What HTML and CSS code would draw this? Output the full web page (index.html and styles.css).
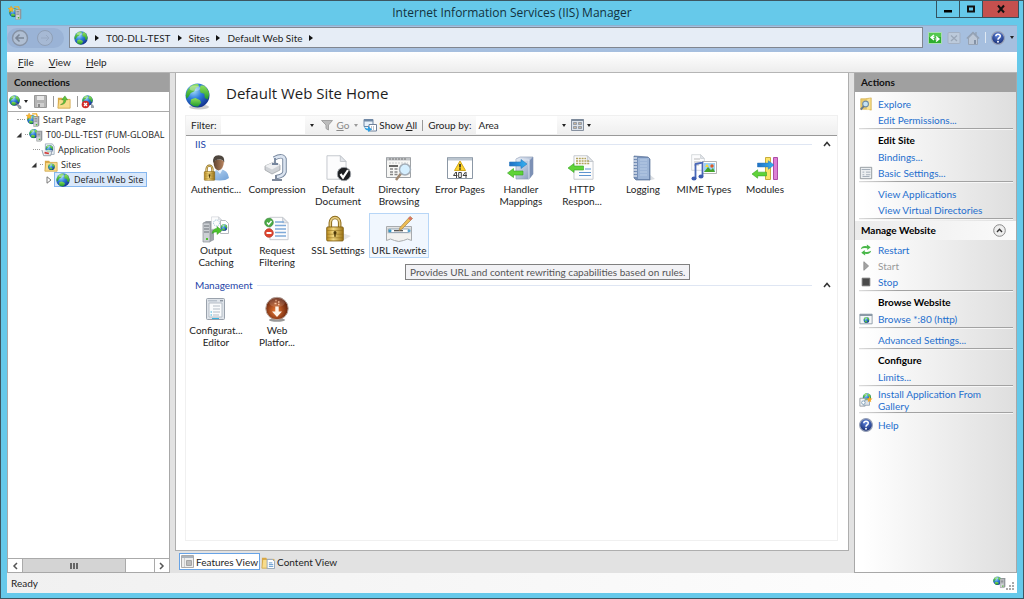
FILE: index.html
```html
<!DOCTYPE html>
<html lang="en">
<head>
<meta charset="utf-8">
<title>Internet Information Services (IIS) Manager</title>
<link rel="stylesheet" href="styles.css">
</head>
<body>
<svg class="defs" aria-hidden="true">
  <defs>
    <radialGradient id="gSea" cx=".35" cy=".3" r=".75"><stop offset="0" stop-color="#a5dcfa"/><stop offset=".45" stop-color="#2f7fdc"/><stop offset="1" stop-color="#12308c"/></radialGradient>
    <linearGradient id="gLand" x1="0" y1="0" x2="0" y2="1"><stop offset="0" stop-color="#8fe05a"/><stop offset="1" stop-color="#1f9a2c"/></linearGradient>
    <linearGradient id="gGold" x1="0" y1="0" x2="1" y2="0"><stop offset="0" stop-color="#b98a1c"/><stop offset=".4" stop-color="#f3d983"/><stop offset="1" stop-color="#9c7314"/></linearGradient>
    <linearGradient id="gBlue" x1="0" y1="0" x2="1" y2="0"><stop offset="0" stop-color="#1f6fc4"/><stop offset="1" stop-color="#35b2f2"/></linearGradient>
    <linearGradient id="gBox" x1="0" y1="0" x2="1" y2="1"><stop offset="0" stop-color="#eef3fa"/><stop offset="1" stop-color="#7f93b8"/></linearGradient>
    <linearGradient id="gSkin" x1="0" y1="0" x2="1" y2="0"><stop offset="0" stop-color="#5f432f"/><stop offset="1" stop-color="#b98560"/></linearGradient>
    <linearGradient id="gShirt" x1="0" y1="0" x2="1" y2="1"><stop offset="0" stop-color="#b9d6f3"/><stop offset="1" stop-color="#6f9fd6"/></linearGradient>
    <radialGradient id="gHelp" cx=".5" cy=".3" r=".7"><stop offset="0" stop-color="#5f86e0"/><stop offset="1" stop-color="#14296f"/></radialGradient>
    <radialGradient id="gRust" cx=".45" cy=".6" r=".6"><stop offset="0" stop-color="#ee7b34"/><stop offset="1" stop-color="#5a1a08"/></radialGradient>
    <symbol id="globe" viewBox="0 0 24 24">
      <circle cx="12" cy="12" r="11.500" fill="url(#gSea)"/>
      <path d="M3 6C5 2.500 9 .8 12.500 1l1 2-3 1.500L9 8 5.500 9.500 3.500 13 1.500 15Q-.2 10 3 6z" fill="url(#gLand)"/>
      <path d="M15 2.500l3-.2q4.500 3 5.300 8.500l-1.300 5-3-1.500-.5-4-3.500-1-1-3z" fill="url(#gLand)"/>
      <path d="M6 15.500l4-1 4.500 2 1 2.500-3 3.500Q8 23 5 20z" fill="url(#gLand)"/>
      <ellipse cx="9.500" cy="5" rx="5" ry="2.500" fill="#fff" opacity=".35"/>
    </symbol>
    <symbol id="server" viewBox="0 0 10 16">
      <path d="M1 2l2-1.500h6V14l-2 1.500H1z" fill="#8f959b"/><path d="M1 2h6v13.500H1z" fill="#ced2d5" stroke="#999" stroke-width=".6"/>
      <path d="M2 4h4M2 6h4M2 8h4" stroke="#74787c"/><path d="M4 12h2v2H4z" fill="#4fbb2d"/>
    </symbol>
    <symbol id="globeserver" viewBox="0 0 16 16">
      <use href="#globe" x="0" y="1" width="11" height="11"/><use href="#server" x="8" y="2" width="8" height="14"/>
    </symbol>
    <symbol id="startpage" viewBox="0 0 16 16">
      <use href="#globe" x="1" y="2" width="11" height="11"/><use href="#server" x="8" y="3" width="8" height="13"/>
      <path d="M3.500 0l1 2.300 2.500.3-2 1.700.6 2.500-2.100-1.300-2.200 1.300.6-2.500L0 2.600l2.500-.3z" fill="#f6b62e" stroke="#da8a12" stroke-width=".4"/><path d="M7 1h5l1 3" fill="none" stroke="#efae2c" stroke-width="1.500"/>
    </symbol>
    <symbol id="folder" viewBox="0 0 16 16">
      <path d="M1 3h5l1 2h8v10H1z" fill="#dba944"/><path d="M2 5h13v10H1z" fill="#f8dc8b" stroke="#c99a3b" stroke-width=".7"/>
    </symbol>
    <symbol id="help" viewBox="0 0 16 16">
      <circle cx="8" cy="8" r="7.300" fill="url(#gHelp)" stroke="#9aa3b8" stroke-width="1.300"/>
      <path d="M5.500 6Q5.600 3.600 8 3.600q2.600 0 2.600 2.200 0 1.300-1.500 2.200Q8 8.700 8 10" fill="none" stroke="#fff" stroke-width="1.700"/><circle cx="8" cy="12.200" r="1.100" fill="#fff"/>
    </symbol>
    <symbol id="padlock" viewBox="0 0 20 26">
      <path d="M5.500 13V7.500a4.500 5 0 0 1 9 0V13" fill="none" stroke="#8b6a1a" stroke-width="3.400"/><path d="M5.500 13V7.500a4.500 5 0 0 1 9 0V13" fill="none" stroke="#e6cd83" stroke-width="1.500"/>
      <rect x="2" y="11.500" width="16" height="13.500" rx="1" fill="url(#gGold)" stroke="#7d5c10" stroke-width=".8"/><path d="M2.500 15h15M2.500 18.500h15M2.500 22h15" stroke="#8b6a1a" opacity=".5"/>
      <circle cx="10" cy="17" r="1.500" fill="#4b380a"/><path d="M9.300 17h1.400v4H9.300z" fill="#4b380a"/>
    </symbol>
    <symbol id="page" viewBox="0 0 22 26">
      <path d="M1 .7h14l6 6V25.300H1z" fill="#fcfcfd" stroke="#c3c7cd"/><path d="M15 .7v6h6z" fill="#e3e6eb" stroke="#c3c7cd"/>
    </symbol>
    <symbol id="greenarrow" viewBox="0 0 16 10"><path d="M0 5L6 .5V3h9.500v4H6v2.500z" fill="#5fd338" stroke="#35a322" stroke-width=".6"/></symbol>
    <symbol id="bluearrow" viewBox="0 0 18 10"><path d="M18 5L12 .5V3H.5v4H12v2.500z" fill="url(#gBlue)" stroke="#2a78bd" stroke-width=".6"/></symbol>
    <symbol id="chev" viewBox="0 0 8 6"><path d="M1 5l3-3.500L7 5" fill="none" stroke="#333" stroke-width="1.500"/></symbol>
  </defs>
</svg>

<div class="window">
  <header class="titlebar">
    <svg class="i14 app-icon" aria-hidden="true"><use href="#startpage"/></svg>
    <h1>Internet Information Services (IIS) Manager</h1>
    <div class="caption">
      <button aria-label="Minimize"><svg width="10" height="10"><path d="M1 6h8v2.500H1z"/></svg></button>
      <button aria-label="Maximize"><svg width="10" height="10"><path d="M2 2.500h6v5H2z" fill="none" stroke="#111" stroke-width="2"/></svg></button>
      <button class="close" aria-label="Close"><svg width="10" height="10"><path d="M2 1.500l6 7M8 1.500l-6 7" stroke="#111" stroke-width="2"/></svg></button>
    </div>
  </header>

  <div class="client">
    <nav class="navbar" aria-label="Location">
      <div class="history">
        <button aria-label="Back"><svg viewBox="0 0 18 18"><circle cx="9" cy="9" r="7.500" fill="#b0bfd3" stroke="#8793a5" stroke-width="1.400"/><path d="M13 9H5.500M8.500 5.500L5 9l3.500 3.500" fill="none" stroke="#7a8697" stroke-width="1.600"/></svg></button>
        <button aria-label="Forward"><svg viewBox="0 0 18 18"><circle cx="9" cy="9" r="7.500" fill="#a6b9d4" stroke="#8f9fb6"/><path d="M5 9h8M10 6l3 3-3 3" fill="none" stroke="#98a9c2"/></svg></button>
      </div>
      <div class="address">
        <svg class="i14" aria-hidden="true"><use href="#globe"/></svg>
        <i class="tri"></i><button>T00-DLL-TEST</button>
        <i class="tri"></i><button>Sites</button>
        <i class="tri"></i><button>Default Web Site</button>
        <i class="tri"></i>
      </div>
      <div class="navtools">
        <button aria-label="Refresh"><svg width="14" height="14" viewBox="0 0 14 14"><rect x=".5" y="1.500" width="13" height="11" fill="#2eae2e" stroke="#a7ddb0"/><path d="M1 2h12v4H1z" fill="#6ed864" opacity=".6"/><path d="M6 4L3 6.500 6 9M3 6.500h3.500M8 5.500l3 2.500-3 2.500M11 8H7.500" fill="none" stroke="#fff" stroke-width="1.400"/></svg></button>
        <button aria-label="Stop loading" disabled><svg width="14" height="14" viewBox="0 0 14 14"><rect x="1" y="1.500" width="12" height="11" rx="1" fill="#bccadb" stroke="#a4b1c3"/><path d="M4 4.500l6 5.500M10 4.500L4 10" stroke="#9aa7b8" stroke-width="1.300"/></svg></button>
        <button aria-label="Home" disabled><svg width="14" height="14" viewBox="0 0 14 14"><path d="M2.500 7v6.500h9V7L7 2.500z" fill="#bcc7d6" stroke="#98a4b5"/><path d="M.8 7.500L7 1.500l6.200 6M10 1v3" fill="none" stroke="#93a0b2" stroke-width="1.300"/><path d="M8 9h2v4H8z" fill="#8492a6"/></svg></button>
        <i class="bar light"></i>
        <button aria-label="Help"><svg class="i14"><use href="#help"/></svg></button>
        <i class="down"></i>
      </div>
    </nav>

    <nav class="menubar" aria-label="Menu">
      <button><span><u>F</u>ile</span></button><button><span><u>V</u>iew</span></button><button><span><u>H</u>elp</span></button>
    </nav>

    <main class="panes">
      <aside class="connections">
        <h2 class="pane-title">Connections</h2>
        <div class="conn-tools">
          <button aria-label="Connect"><svg width="13" height="14" viewBox="0 0 13 14"><use href="#globe" width="11" height="11" y="0"/><path d="M7 8l5 3.500v2H10z" fill="#9aa3ab" stroke="#666" stroke-width=".5"/></svg></button><i class="down"></i>
          <button aria-label="Save" disabled><svg width="13" height="13" viewBox="0 0 13 13"><path d="M.5.5h12v12H.5z" fill="#b4b4b4" stroke="#989898"/><path d="M3 1h7v4H3z" fill="#e6e6e6"/><path d="M3 8h7v4H3z" fill="#cfcfcf"/><path d="M4 9h2v3H4z" fill="#888"/></svg></button>
          <i class="bar"></i>
          <button aria-label="Up"><svg width="14" height="14" viewBox="0 0 16 16"><use href="#folder"/><path d="M4 11Q8 10 8 5.500H5.500L9 1l3 4.500h-2Q10 11 4 11z" fill="#5dc33c" stroke="#378c20" stroke-width=".6"/></svg></button>
          <i class="bar"></i>
          <button aria-label="Remove connection"><svg width="14" height="14" viewBox="0 0 14 14"><use href="#globe" width="11" height="11" x="1"/><path d="M10 8l3 3v2h-3z" fill="#9aa3ab"/><circle cx="4.500" cy="9.500" r="3.800" fill="#d22c28"/><path d="M3 8l3 3M6 8l-3 3" stroke="#fff" stroke-width="1.300"/></svg></button>
        </div>
        <ul class="tree">
          <li><span class="node l1"><i class="dots"></i><svg class="i14"><use href="#startpage"/></svg><a href="#">Start Page</a></span></li>
          <li><span class="node l1"><svg class="open" viewBox="0 0 6 6"><path d="M5.500.5v5h-5z"/></svg><i class="dash"></i><svg class="i14"><use href="#globeserver"/></svg><a href="#">T00-DLL-TEST (FUM-GLOBAL</a></span>
            <ul>
              <li><span class="node l2"><i class="dots"></i><svg class="i14" viewBox="0 0 16 16"><path d="M5 1h8l2 3v9H5z" fill="#f2f6fa" stroke="#9aa9b8"/><use href="#globe" x="5" y="2" width="9" height="9"/><path d="M1 8l2 6.500h8L13 8" fill="#eceff2" fill-opacity=".7" stroke="#8b98a5"/><path d="M4 11l5 1" stroke="#d13c37" stroke-width="1.800"/></svg><a href="#">Application Pools</a></span></li>
              <li><span class="node l2"><svg class="open" viewBox="0 0 6 6"><path d="M5.500.5v5h-5z"/></svg><i class="dash"></i><svg class="i14" viewBox="0 0 16 16"><use href="#folder"/><use href="#globe" x="4.500" y="6" width="8" height="8"/></svg><a href="#">Sites</a></span>
                <ul>
                  <li><span class="node l3"><svg class="shut" viewBox="0 0 6 8"><path d="M1 .8L5 4 1 7.200z"/></svg><span class="selected"><svg class="i14"><use href="#globe"/></svg><a href="#">Default Web Site</a></span></span></li>
                </ul></li>
            </ul></li>
        </ul>
        <div class="hscroll">
          <button aria-label="Scroll left"><svg width="6" height="8"><path d="M5 1L2 4l3 3" fill="none" stroke="#555" stroke-width="1.500"/></svg></button>
          <div class="track"><div class="thumb"><i></i><i></i><i></i></div></div>
          <button aria-label="Scroll right"><svg width="6" height="8"><path d="M1 1l3 3-3 3" fill="none" stroke="#555" stroke-width="1.500"/></svg></button>
        </div>
      </aside>

      <section class="center">
        <div class="home">
          <div class="home-head">
            <svg class="big-globe" viewBox="0 0 26 27"><ellipse cx="14" cy="24" rx="10" ry="2.500" fill="#aaa" opacity=".6"/><use href="#globe" width="25" height="25"/></svg>
            <h2>Default Web Site Home</h2>
          </div>
          <div class="listbox">
            <div class="filterbar">
              <label for="filter">Filter:</label>
              <input id="filter" type="text"><i class="down"></i>
              <button class="go" disabled><svg width="12" height="12" viewBox="0 0 12 12"><path d="M.5 1.500h11L7.500 6v5L5 9.500V6z" fill="#bcbcbc" stroke="#a2a2a2"/></svg><span><u>G</u>o</span></button><i class="down dim"></i>
              <button class="showall"><svg width="14" height="14" viewBox="0 0 14 14"><path d="M1 1.500h9v7H1z" fill="#e8f1fa" stroke="#7088a5"/><path d="M1 2.500h9" stroke="#7088a5" stroke-width="2"/><path d="M6 6.500h7.500V13H6z" fill="#fff" stroke="#70819a"/><path d="M8 9h4M8 11h4" stroke="#70819a" stroke-dasharray="1 1"/><path d="M1 6q0 4.500 4 4.500V8l4 3.500-4 2.500v-1.500Q1 12.500 1 6z" fill="#2f9fe2"/></svg><span>Show <u>A</u>ll</span></button>
              <i class="bar"></i>
              <label for="group">Group by:</label>
              <select id="group"><option>Area</option><option>Category</option></select><i class="down"></i>
              <button aria-label="View" class="viewbtn"><svg width="13" height="12" viewBox="0 0 13 12"><path d="M.5.500h12v11H.5z" fill="#dde3ea" stroke="#8791a0"/><path d="M.5 1h12" stroke="#7c899a" stroke-width="2"/><path d="M2.500 3.500h3v2h-3zM7.500 3.500h3v2h-3zM2.500 7.500h3v2h-3zM7.500 7.500h3v2h-3z" fill="#cbb79b" stroke="#7d889a" stroke-width=".7"/></svg></button><i class="down"></i>
            </div>

            <section class="group">
              <header><h3>IIS</h3><hr><button aria-label="Collapse IIS"><svg width="8" height="6"><use href="#chev"/></svg></button></header>
              <div class="tiles">
                <a href="#"><svg viewBox="0 0 28 28"><path d="M9 26q0-10 9-10.500 8 0 9 8.500-3 2.500-9 2.500z" fill="url(#gShirt)"/><path d="M14.500 15.500l3.500 4.500 3-5z" fill="#e8f2fc"/><path d="M11.500 7q0 8.500 5 9.500 5-1 5.500-9.500-5-3-10.500 0z" fill="url(#gSkin)"/><path d="M11.300 9Q10 1.200 16.500 1.200T22.300 8.500Q21 5 17 5.500q-4 0-5.700 3.500z" fill="#4e463e"/><use href="#padlock" x="1" y="10" width="13" height="17"/></svg>Authentic...</a>
                <a href="#"><svg viewBox="0 0 28 28"><path d="M2 12l9-4 6 3v5l-8 4-7-4z" fill="#cfd2d6" stroke="#989ca1" stroke-width=".7"/><path d="M2 12l9-4 6 3-8 4.500z" fill="#eff0f2"/><path d="M11 4.500Q20 0 21.500 5v13q-1 4-8 5" fill="none" stroke="#76869d" stroke-width="4.500"/><path d="M11 4.500Q20 0 21.500 5v13q-1 4-8 5" fill="none" stroke="#dbe4f0" stroke-width="2.600"/><path d="M12 4v6M9 10h6" stroke="#76869d" stroke-width="1.800"/><path d="M13 21v4M9 26h10" stroke="#7d889a" stroke-width="2"/></svg>Compression</a>
                <a href="#"><svg viewBox="0 0 28 28"><use href="#page" x="2" y="1" width="21" height="25"/><circle cx="20" cy="20" r="6.700" fill="#1d1f22" stroke="#9a9ea3"/><path d="M16.500 20l2.500 3.500 5-7.500" fill="none" stroke="#fff" stroke-width="2.200"/></svg>Default Document</a>
                <a href="#"><svg viewBox="0 0 28 28"><path d="M1.500 3.500h24v20h-24z" fill="#f7f7f5" stroke="#9ea2a6"/><path d="M2 5h23" stroke="#c0c3c6" stroke-width="3"/><path d="M4 5h18" stroke="#777" stroke-dasharray="2 1"/><path d="M4 9h19" stroke="#c9cbcc" stroke-dasharray="2 1"/><path d="M4 12h9" stroke="#444" stroke-width="1.600"/><path d="M5 15h3M9.500 15h3M5 18h3M9.500 18h3M5 20.500h3M9.500 20.500h3" stroke="#888" stroke-width="1.400"/><path d="M16 19.500l-5 6.500" stroke="#a08870" stroke-width="2.500"/><circle cx="20" cy="15.500" r="5.500" fill="#d5efff" stroke="#a3adb7" stroke-width="1.500"/></svg>Directory Browsing</a>
                <a href="#"><svg viewBox="0 0 28 28"><path d="M1.500 3.500h25v21h-25z" fill="#fff" stroke="#8c98a6"/><path d="M2 5h24" stroke="#bac4ce" stroke-width="3"/><path d="M14 7l5.500 9.500h-11z" fill="#ffd52b" stroke="#cfa61c"/><path d="M14 10v3.500M14 14.300v1.500" stroke="#222" stroke-width="1.500"/><path d="M10 18l-2.500 3.500h4M10.500 18v6M15.300 18.500h-2.600v5h2.600zM19.500 18L17 21.500h4M20 18v6" fill="none" stroke="#444"/></svg>Error Pages</a>
                <a href="#"><svg viewBox="0 0 28 28"><path d="M9 5l4-2h13v17l-4 5H9z" fill="url(#gBox)" stroke="#93a1b9" stroke-width=".7"/><path d="M22 7l4-4v17l-4 5z" fill="#7c90b5"/><path d="M9 6h13v19" fill="none" stroke="#dde6f2"/><use href="#bluearrow" x="2" y="5" width="18" height="10"/><use href="#greenarrow" x="0" y="14" width="17" height="10"/></svg>Handler Mappings</a>
                <a href="#"><svg viewBox="0 0 28 28"><use href="#page" x="5" y="1" width="21" height="25"/><path d="M8 4.500h10M8 7h13M8 9.500h14" stroke="#b3a35d" stroke-width="1.600" stroke-dasharray="2 .8"/><path d="M17 15h6M11 18.500h12M11 21.500h12" stroke="#5e94cf" stroke-width="1.200"/><use href="#greenarrow" x="0" y="9" width="16" height="10"/></svg>HTTP Respon...</a>
                <a href="#"><svg viewBox="0 0 28 28"><path d="M20 20l6 5-6 1.500z" fill="#c5c9d0" opacity=".6"/><path d="M5 2l14 1 2 2v21H7l-2-2z" fill="#7690b8" stroke="#5a7299" stroke-width=".7"/><path d="M9 4h11v21H9z" fill="#9db5d7"/><path d="M11 6h7M11 9h7M11 12h7M11 15h7M11 18h7M11 21h7" stroke="#b7cbe5"/><path d="M4 4h4M4 7h4M4 10h4M4 13h4M4 16h4M4 19h4M4 22h4" stroke="#dae1ed" stroke-width="1.300"/></svg>Logging</a>
                <a href="#"><svg viewBox="0 0 28 28"><use href="#page" x="1" y="0" width="14" height="17"/><path d="M4 5h6M4 8h7M4 11h5" stroke="#bbb"/><path d="M12.500 7.500h14v12h-14z" fill="#fff" stroke="#b4b4b4"/><path d="M14 9h11v9H14z" fill="#9dd2f5"/><path d="M14 18l4-5 3 3 2-2 2 4z" fill="#46a52b"/><circle cx="22" cy="12" r="1.700" fill="#e05a26"/><path d="M15 13l2-3 2 3z" fill="#ffd831"/><path d="M5.500 24.500V10l7-1.500V22" fill="none" stroke="#4867b8" stroke-width="1.800"/><ellipse cx="4" cy="24.500" rx="2.500" ry="2" fill="#3d5db0"/><ellipse cx="11" cy="22.500" rx="2.500" ry="2" fill="#3d5db0"/></svg>MIME Types</a>
                <a href="#"><svg viewBox="0 0 28 28"><path d="M14.500 3.500h5v22h-5z" fill="#fae46a" stroke="#c9ad3a"/><path d="M22.500 3.500h4v22h-4z" fill="#dd80d5" stroke="#ad4ca6"/><use href="#bluearrow" x="6" y="6" width="17" height="10"/><use href="#greenarrow" x="1" y="15" width="15" height="10"/></svg>Modules</a>
                <a href="#"><svg viewBox="0 0 28 28"><path d="M1 8l3-2h8v19l-4 2H1z" fill="#9da2a8"/><path d="M1 8h7v19H1z" fill="#ccd0d4" stroke="#8b9096" stroke-width=".7"/><path d="M2 11h5M2 14h5M2 17h5" stroke="#6b7077" stroke-width="1.200"/><path d="M4 23h2v2H4z" fill="#50be30"/><use href="#page" x="9" y="1" width="11" height="14"/><circle cx="14.500" cy="8" r="3" fill="none" stroke="#8ab7cf" stroke-dasharray="1 1"/><path d="M18.500 5.500h5l3 3v10h-8z" fill="#fff" stroke="#b6babf"/><use href="#globe" x="18.500" y="9" width="7" height="7"/><path d="M20 15.500l-5-4v2q-4 0-5 5 2-2 5-1.500v2.500z" fill="#4dc42a" stroke="#35992a" stroke-width=".5"/></svg>Output Caching</a>
                <a href="#"><svg viewBox="0 0 28 28"><use href="#page" x="6" y="1" width="20" height="25"/><path d="M12 7h9M12 10.500h11M12 14h11M12 17.500h11M12 21h11" stroke="#7fa9d8" stroke-width="1.300"/><circle cx="6" cy="7.500" r="4.300" fill="#4aab45" stroke="#38853a" stroke-width=".7"/><path d="M4 7.500l1.700 2L8.500 6" fill="none" stroke="#fff" stroke-width="1.400"/><circle cx="6" cy="18" r="4.300" fill="#de432d" stroke="#b33a2a" stroke-width=".7"/><path d="M3.500 18h5" stroke="#fff" stroke-width="2"/></svg>Request Filtering</a>
                <a href="#"><svg viewBox="0 0 28 28"><path d="M18 18l9 3-9 5z" fill="#bbb" opacity=".4"/><use href="#padlock" x="0" y="0" width="22" height="27"/></svg>SSL Settings</a>
                <a href="#" class="hot" aria-describedby="tip"><svg viewBox="0 0 28 28"><path d="M1.500 11.500h25v14q-4-3-8 0-5 2-9 0-4-3-8 0z" fill="#f1f1ef" stroke="#a8abae"/><path d="M2 12.500h24v6H2z" fill="#d4d7d8"/><path d="M3.500 14h20v3.500h-20z" fill="#fff" stroke="#9aa9b6"/><circle cx="5" cy="15.700" r="1.500" fill="#3597c5"/><circle cx="24" cy="15.700" r="1.500" fill="#5aa5d0"/><path d="M9 15.700h9" stroke="#444" stroke-width="1.200"/><path d="M14 15.500l1-3L25 1.500l2.500 2L17 14z" fill="#edbd55" stroke="#a58245" stroke-width=".7"/><path d="M25 1.500l2.500 2-2 2-2.500-2z" fill="#d77565"/></svg>URL Rewrite<span id="tip" role="tooltip">Provides URL and content rewriting capabilities based on rules.</span></a>
              </div>
            </section>

            <section class="group second">
              <header><h3>Management</h3><hr><button aria-label="Collapse Management"><svg width="8" height="6"><use href="#chev"/></svg></button></header>
              <div class="tiles">
                <a href="#"><svg viewBox="0 0 28 28"><rect x="4.500" y="3.500" width="18" height="21" rx="1" fill="#dfe4ea" stroke="#9aa2ac"/><path d="M7 8h13v14H7z" fill="#fafbfc" stroke="#b5bdc6"/><path d="M6 5.800h9" stroke="#a9b3be"/><path d="M18 5.800h3" stroke="#6a7684"/><path d="M11 11h7M11 14h7M11 17h7M11 20h6" stroke="#b5bdc6"/><path d="M8.500 17h1.500M8.500 20h1.500M10 23.500h7" stroke="#39b2dd"/></svg>Configurat... Editor</a>
                <a href="#"><svg viewBox="0 0 28 28"><ellipse cx="14" cy="25" rx="8" ry="1.800" fill="#555" opacity=".6"/><circle cx="14" cy="13.500" r="11.200" fill="url(#gRust)" stroke="#b8a79f"/><ellipse cx="14" cy="7.500" rx="8" ry="4.500" fill="#fff" opacity=".15"/><path d="M12.300 11.500h3.400v5h3.300l-5 5.500-5-5.500h3.300z" fill="#fff5e9"/><path d="M11.500 8.500h2M15 7h1.500M15 9.500h1.500M12.500 5.500h1" stroke="#fbc49f" stroke-width="1.400"/></svg>Web Platfor...</a>
              </div>
            </section>
          </div>
        </div>
        <div class="viewtabs">
          <button class="on"><svg width="13" height="13" viewBox="0 0 13 13"><path d="M.5.500h12v12H.5z" fill="#eee" stroke="#aaa"/><path d="M1 2h11" stroke="#a9b2bc" stroke-width="2"/><path d="M3.500 3v9" stroke="#ccc"/><path d="M5.500 5.500h5v5h-5z" fill="#ddd" stroke="#a4a4a4"/><path d="M6 7h4M6 9h4" stroke="#999"/></svg>Features View</button>
          <button><svg width="14" height="14" viewBox="0 0 16 16"><use href="#folder"/><path d="M7 5h6l2.500 2.500V15.500H7z" fill="#fff" stroke="#8aa1bb"/><path d="M9 9h4M9 11h5M9 13h5" stroke="#4e8cc8"/></svg>Content View</button>
        </div>
      </section>

      <aside class="actions">
        <h2 class="pane-title">Actions</h2>
        <div class="actlist">
          <p><svg class="i14" viewBox="0 0 16 16"><path d="M2 2h5l7-1v14l-4-1H2z" fill="#eccb69" stroke="#cfa94a" stroke-width=".7"/><path d="M9 3l4-1.500V14l-4 1z" fill="#f8e39a"/><circle cx="7.500" cy="8" r="3.300" fill="#c4e3f6" stroke="#708ba3" stroke-width="1.200"/><path d="M5.500 10.500L2 14.500" stroke="#65798c" stroke-width="2"/></svg><a href="#">Explore</a></p>
          <p><a href="#">Edit Permissions...</a></p>
          <hr>
          <h3>Edit Site</h3>
          <p><a href="#">Bindings...</a></p>
          <p><svg class="i14" viewBox="0 0 16 16"><path d="M1.500 1.500h13v13h-13z" fill="#eceff1" stroke="#8d9399"/><path d="M3 4h10M4 7h2M8 7h5M4 10h2M8 10h5M4 12h8" stroke="#9ba7b2"/></svg><a href="#">Basic Settings...</a></p>
          <hr>
          <p><a href="#">View Applications</a></p>
          <p><a href="#">View Virtual Directories</a></p>
          <hr class="flush">
          <div class="manage"><h3>Manage Website</h3><button aria-label="Collapse Manage Website"><svg width="13" height="13" viewBox="0 0 13 13"><circle cx="6.500" cy="6.500" r="5.800" fill="#eee" stroke="#888"/><path d="M4 8l2.500-2.800L9 8" fill="none" stroke="#333" stroke-width="1.400"/></svg></button></div>
          <p><svg class="i12" viewBox="0 0 14 14"><path d="M1 6Q2 1.500 8 2.500V.5l4.500 3.300L8.500 7V5Q4 4 1 6zM13 8q-1 4.500-7 3.500v2L1.500 10.200 5.500 7v2Q10 10 13 8z" fill="#49b749"/></svg><a href="#">Restart</a></p>
          <p><svg class="i12" viewBox="0 0 14 14"><path d="M4.500 2l5.500 5-5.500 5z" fill="#a3a3a3" stroke="#8b8b8b"/></svg><button disabled>Start</button></p>
          <p><svg class="i12" viewBox="0 0 14 14"><path d="M2.500 2.500h9v9h-9z" fill="#4a4a4a" stroke="#777"/></svg><a href="#">Stop</a></p>
          <hr>
          <h3>Browse Website</h3>
          <p><svg class="i14" viewBox="0 0 16 16"><path d="M1 2.500h14v11H1z" fill="#f4f6f7" stroke="#8a98a5"/><path d="M1 3.500h14" stroke="#8493a2" stroke-width="2"/><use href="#globe" x="5" y="5.500" width="7" height="7"/></svg><a href="#">Browse *:80 (http)</a></p>
          <hr>
          <p><a href="#">Advanced Settings...</a></p>
          <hr>
          <h3>Configure</h3>
          <p><a href="#">Limits...</a></p>
          <hr class="flush">
          <p class="wrap"><svg class="i14" viewBox="0 0 16 16"><use href="#globe" x="4" y="0" width="10" height="10"/><path d="M1 6h6v9H1z" fill="#f1f2f3" stroke="#91989f"/><path d="M7 8h5v6H5z" fill="#dce2e8" stroke="#93a3b2"/><circle cx="5" cy="11" r="2" fill="#fff" stroke="#7c9bb6"/><path d="M12 3.500l1 2.500 2.500.5-2 1.500.5 2.500-2-1.300-2 1.300.5-2.500-2-1.500L11 6z" fill="#f5a927"/></svg><a href="#">Install Application From Gallery</a></p>
          <hr>
          <p><svg class="i14"><use href="#help"/></svg><a href="#">Help</a></p>
        </div>
      </aside>
    </main>

    <footer class="status"><span>Ready</span><svg width="22" height="16" viewBox="0 0 22 16"><use href="#globeserver" width="13" height="14"/><path d="M19 7h2v2h-2zM16 10h2v2h-2zM19 10h2v2h-2zM13 13h2v2h-2zM16 13h2v2h-2zM19 13h2v2h-2z" fill="#aaa"/></svg></footer>
  </div>
</div>
</body>
</html>
```
FILE: styles.css
```css
* { box-sizing: border-box; }
body { margin: 0; height: 100vh; overflow: hidden; font: 10px/12px Lato, "Open Sans", sans-serif; color: #1e1e1e; }
button, input, select { font: inherit; color: inherit; background: none; border: 0; padding: 0; margin: 0; }
button { display: flex; align-items: center; }
h1, h2, h3, p, ul { margin: 0; padding: 0; font-weight: normal; font-size: inherit; }
ul { list-style: none; }
a { color: inherit; text-decoration: none; }
svg { flex: none; display: block; }
hr { border: 0; margin: 0; }
.defs { position: absolute; width: 0; height: 0; }
.i14 { width: 14px; height: 14px; }
.i12 { width: 12px; height: 12px; }

.window { height: 100%; display: flex; flex-direction: column; background: #66c9ea; border: 1px solid #3d5661; padding: 0 6px 5px; }
.titlebar { height: 24px; flex: none; display: grid; grid-template-columns: 1fr auto 1fr; align-items: center; }
.titlebar h1 { font-family: "Open Sans", "Noto Sans", sans-serif; font-size: 12px; line-height: 16px; color: #12313d; }
.app-icon { margin-left: 1px; }
.caption { display: flex; justify-self: end; align-self: start; border: 1px solid #34525f; border-top: 0; margin-right: -2px; }
.caption button { width: 23px; height: 16px; justify-content: center; border-right: 1px solid #34525f; }
.caption .close { width: 35px; background: #c5504e; border: 0; }

.client { flex: 1; min-height: 0; display: flex; flex-direction: column; background: #e2e2e2; }
.navbar { height: 27px; flex: none; display: flex; align-items: center; gap: 5px; background: #a6bfdf; border-top: 1px solid #8fb0cf; padding-bottom: 3px; }
.history { width: 57px; display: flex; justify-content: space-between; background: #9ab3d6; border-radius: 11px; padding: 1px 10px 1px 4px; }
.history svg { width: 18px; height: 18px; }
.address { flex: 1; height: 21px; display: flex; align-items: center; gap: 7px; padding-left: 4px; background: #e6edf6; border: 1px solid #80868f; }
.navtools { display: flex; align-items: center; gap: 5px; width: 89px; }
.tri { border: 3px solid transparent; border-left: 4px solid #111; border-right: 0; }
.down { border: 2px solid transparent; border-top: 3px solid #222; border-bottom: 0; flex: none; }
.dim { border-top-color: #999; }
.bar { width: 1px; height: 11px; background: #999; }
.bar.light { background: #dfe8f2; }
.menubar { height: 21px; flex: none; display: flex; align-items: center; gap: 15px; padding-left: 11px; background: linear-gradient(#fff, #ededed); border-bottom: 1px solid #b5b5b5; }

.panes { flex: 1; min-height: 0; display: grid; grid-template-columns: 163px minmax(0, 1fr) 163px; gap: 5px; }
.pane-title { font-weight: bold; background: #a0a0a0; color: #111; height: 19px; padding: 3px 6px; }
.connections { display: flex; flex-direction: column; min-width: 0; background: #fff; border: 1px solid #a8a8a8; border-top: 0; }
.conn-tools { height: 20px; flex: none; display: flex; align-items: center; gap: 3px; border-bottom: 1px solid #aaa; padding-left: 1px; }
.conn-tools .bar { margin-left: 3px; }
.conn-tools .down { margin: 0 3px 0 -1px; }
.tree { flex: 1; min-height: 0; overflow: hidden; white-space: nowrap; font-family: "Open Sans", "Noto Sans", sans-serif; font-size: 9px; }
.node { display: flex; align-items: center; height: 15px; gap: 3px; }
.l1 { padding-left: 8px; }
.l2 { padding-left: 23px; }
.l3 { padding-left: 38px; }
.dots { width: 8px; border-top: 1px dotted #999; margin-left: 1px; margin-right: -2px; }
.l2 .dots { margin-left: 2px; width: 7px; }
.open { width: 6px; height: 6px; fill: #333; }
.dash { width: 3px; border-top: 1px dotted #999; margin: 0 -2px 0 0; }
.shut { width: 6px; height: 8px; fill: #fff; stroke: #777; }
.selected { display: flex; align-items: center; gap: 4px; height: 15px; padding: 0 2px 0 1px; background: #d9e8fb; border: 1px solid #86b7ef; margin-left: -1px; }
.hscroll { height: 14px; flex: none; display: flex; background: #fff; border-top: 1px solid #aaa; }
.hscroll > button { width: 14px; justify-content: center; }
.track { flex: 1; display: flex; border: 1px solid #aaa; border-width: 0 1px; }
.thumb { width: 79%; display: flex; justify-content: center; align-items: center; gap: 1px; background: #d4d4d4; border-right: 1px solid #aaa; }
.thumb i { width: 2px; height: 6px; background: #666; }

.center { display: flex; flex-direction: column; min-width: 0; }
.home { flex: 1; min-height: 0; display: flex; flex-direction: column; background: #fff; border: 1px solid #aeaeae; border-top: 0; padding: 0 10px 9px 9px; }
.home-head { height: 42px; flex: none; display: flex; align-items: center; gap: 15px; padding-top: 4px; }
.home-head h2 { font-family: "Open Sans", "Noto Sans", sans-serif; font-size: 15px; line-height: 20px; margin-bottom: 6px; }
.big-globe { width: 26px; height: 27px; }
.listbox { flex: 1; min-height: 0; border: 1px solid #f0f0f0; }
.filterbar { height: 20px; display: flex; align-items: center; gap: 5px; padding: 0 0 1px 5px; background: linear-gradient(#fbfbfb, #eee); border-bottom: 1px solid #999; }
.filterbar input { width: 84px; height: 18px; background: #fff; }
.filterbar select { appearance: none; width: 81px; height: 18px; background: #fff; padding-left: 2px; }
.go { gap: 3px; color: #888; margin-left: 2px; }
.showall { gap: 2px; }
.viewbtn + .down { margin-left: -2px; }
.group header { display: flex; align-items: center; gap: 4px; height: 16px; padding: 0 6px 0 9px; }
.group.second { margin-top: 3px; }
.group h3 { color: #2444a8; }
.group hr { flex: 1; border-top: 1px solid #dfe6f3; margin-right: 7px; }
.tiles { display: grid; grid-template-columns: repeat(auto-fill, 60px); column-gap: 1px; grid-auto-rows: 61px; }
.tiles a { display: flex; flex-direction: column; align-items: center; text-align: center; height: 45px; padding-top: 1px; border: 1px solid transparent; }
.tiles svg { width: 28px; height: 28px; margin-bottom: 1px; }
.tiles .hot { position: relative; background: #f1f7fe; border-color: #b7d6f7; }
#tip { position: absolute; left: 35px; top: 50px; white-space: nowrap; background: #f2f2f5; color: #555; border: 1px solid #808080; padding: 1px 4px; z-index: 2; }
.viewtabs { height: 22px; flex: none; display: flex; align-items: center; gap: 0; padding: 0 0 1px 4px; }
.viewtabs button { height: 17px; gap: 2px; padding: 0 1px; }
.viewtabs .on { background: #fff; border: 1px solid #67a3e6; }

.actions { min-width: 0; background: linear-gradient(90deg, #fff 5%, #dedede); border: 1px solid #a8a8a8; border-top: 0; }
.actlist { padding: 4px 3px 0 4px; color: #1f6fce; }
.actlist p { min-height: 16px; display: grid; grid-template-columns: 14px 1fr; column-gap: 5px; align-items: center; justify-items: start; }
.actlist p > a, .actlist p > button { grid-column: 2; }
.actlist p > svg { grid-row: 1; }
.actlist button:disabled { color: #999; }
.actlist .i12 { margin-left: 1px; }
.actlist .wrap a { padding-right: 24px; }
.actlist hr { height: 5px; background: linear-gradient(90deg, #ddd, #a2a2a2 25%) 0 0 / 100% 1px no-repeat, linear-gradient(#f6f6f6, #f6f6f6) 0 1px / 100% 1px no-repeat; }
.actlist hr.flush { height: 3px; }
.actlist h3 { height: 16px; line-height: 15px; font-weight: bold; color: #000; padding-left: 19px; }
.manage { display: flex; align-items: center; justify-content: space-between; height: 19px; margin: 0 -3px 2px -4px; padding: 0 10px 0 6px; background: linear-gradient(90deg, #ececec, #fafafa); }
.actlist .manage h3 { padding: 0; }

.status { height: 20px; flex: none; display: flex; align-items: center; justify-content: space-between; padding: 0 2px 0 4px; background: linear-gradient(90deg, #f0f0f0, #fff); }
```
